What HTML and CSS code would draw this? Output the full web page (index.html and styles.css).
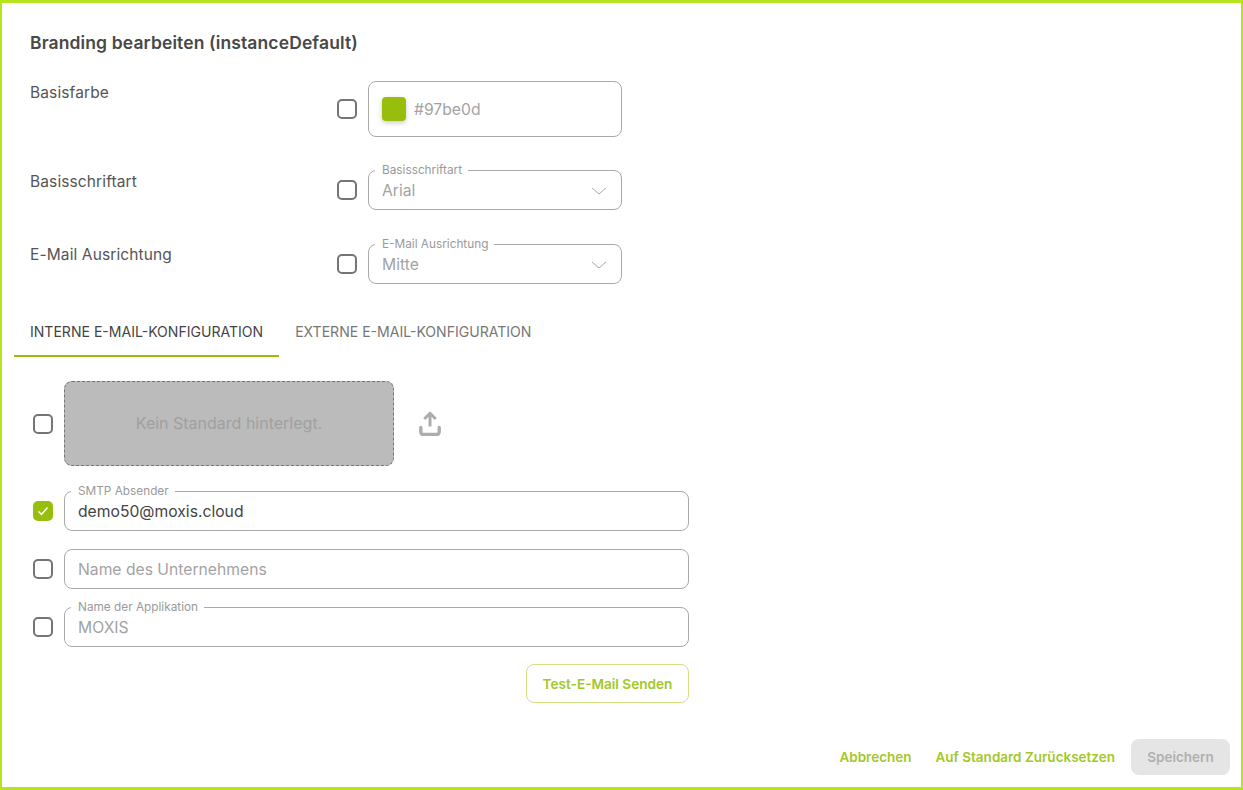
FILE: index.html
```html
<!DOCTYPE html>
<html lang="de">
<head>
<meta charset="utf-8">
<title>Branding bearbeiten</title>
<link rel="stylesheet" href="styles.css">
</head>
<body>
<main class="frame">
  <h1 class="title">Branding bearbeiten (instanceDefault)</h1>
  <section class="settings">
    <div class="setting setting-color">
      <span class="setting-label">Basisfarbe</span>
      <span class="check"></span>
      <div class="color-field"><span class="swatch"></span><span class="muted-value color-value">#97be0d</span></div>
    </div>
    <div class="setting setting-font">
      <span class="setting-label setting-label-offset">Basisschriftart</span>
      <span class="check check-legend"></span>
      <fieldset class="field field-short">
        <legend class="field-legend">Basisschriftart</legend>
        <span class="muted-value">Arial</span>
        <svg class="chevron" viewBox="0 0 16 8"><path d="M1 1l7 6 7-6"/></svg>
      </fieldset>
    </div>
    <div class="setting setting-align">
      <span class="setting-label setting-label-align">E-Mail Ausrichtung</span>
      <span class="check check-legend"></span>
      <fieldset class="field field-short">
        <legend class="field-legend">E-Mail Ausrichtung</legend>
        <span class="muted-value">Mitte</span>
        <svg class="chevron" viewBox="0 0 16 8"><path d="M1 1l7 6 7-6"/></svg>
      </fieldset>
    </div>
  </section>
  <nav class="tabs">
    <span class="tab tab-active">INTERNE E-MAIL-KONFIGURATION</span>
    <span class="tab">EXTERNE E-MAIL-KONFIGURATION</span>
  </nav>
  <section class="panel">
    <div class="logo-row">
      <span class="check"></span>
      <div class="dropzone">Kein Standard hinterlegt.</div>
      <svg class="upload" viewBox="0 0 22 25"><path d="M11 15.5V2.500M5.300 8 11 2.200 16.700 8"/><path class="upload-tray" d="M1.800 16.500V21a2.500 2.500 0 0 0 2.500 2.500h13.400a2.500 2.500 0 0 0 2.500-2.500v-4.500"/></svg>
    </div>
    <div class="mail-fields">
      <div class="mail-row">
        <span class="check check-on check-legend"><svg viewBox="0 0 20 20"><path d="M5.500 10.500l3 3 6-7"/></svg></span>
        <fieldset class="field field-wide">
          <legend class="field-legend">SMTP Absender</legend>
          <span class="strong-value">demo50@moxis.cloud</span>
        </fieldset>
      </div>
      <div class="mail-row">
        <span class="check check-legend"></span>
        <fieldset class="field field-wide">
          <legend class="field-legend field-legend-empty"></legend>
          <span class="muted-value">Name des Unternehmens</span>
        </fieldset>
      </div>
      <div class="mail-row">
        <span class="check check-legend"></span>
        <fieldset class="field field-wide">
          <legend class="field-legend">Name der Applikation</legend>
          <span class="muted-value">MOXIS</span>
        </fieldset>
      </div>
    </div>
    <div class="test-row"><button class="btn-outline" type="button">Test-E-Mail Senden</button></div>
  </section>
  <footer class="actions">
    <span class="link-action">Abbrechen</span>
    <span class="link-action">Auf Standard Zurücksetzen</span>
    <button class="btn-disabled" type="button">Speichern</button>
  </footer>
</main>
</body>
</html>
```

FILE: styles.css
```css
* { box-sizing: border-box; }
html, body { margin: 0; height: 100%; }
body {
  background: #fff;
  color: #444;
  font-family: "Inter", "Liberation Sans", sans-serif;
  font-size: 16px;
}
.frame {
  height: 790px;
  border-style: solid;
  border-color: #b5e61d;
  border-width: 3px 2px;
  padding: 29px 11px 12px 12px;
  display: flex;
  flex-direction: column;
}
.title {
  margin: 0 0 27px 16px;
  font-size: 17.500px;
  letter-spacing: .12px;
  line-height: 22px;
  font-weight: 600;
  color: #484848;
}
.settings { padding-left: 16px; }
.setting { display: flex; align-items: center; }
.setting-font, .setting-align { align-items: flex-end; }
.setting-font { margin-top: 27px; }
.setting-align { margin-top: 28px; }
.setting-label {
  width: 307px;
  align-self: flex-start;
  padding-top: 1px;
  line-height: 22px;
  font-size: 15.500px;
  letter-spacing: .12px;
  color: #555;
}
.setting-label-offset { padding-top: 7px; }
.setting-label-align { padding-top: 6px; }
.check {
  flex: none;
  width: 20px;
  height: 20px;
  border: 2px solid #757575;
  border-radius: 5px;
  background: #fff;
}
.check-legend { margin-bottom: 10px; }
.check-on { background: #97be0d; border-color: #97be0d; position: relative; }
.check-on svg {
  position: absolute;
  inset: -2px;
  width: 20px;
  height: 20px;
  fill: none;
  stroke: #fff;
  stroke-width: 1.500;
}
.color-field {
  margin-left: 11px;
  width: 254px;
  height: 56px;
  border: 1px solid #aaa;
  border-radius: 8px;
  padding-left: 13px;
  display: flex;
  align-items: center;
  gap: 8px;
}
.swatch {
  width: 24px;
  height: 24px;
  border-radius: 4px;
  background: #97be0d;
  box-shadow: 0 2px 5px rgba(0, 0, 0, .2);
}
.color-value { padding-top: 1px; }
.field {
  margin: 0;
  min-width: 0;
  height: 46px;
  border: 1px solid #aaa;
  border-radius: 8px;
  padding: 0 13px 4px;
  display: flex;
  align-items: center;
  justify-content: space-between;
}
.field-short { width: 254px; margin-left: 11px; }
.field-wide { width: 625px; margin-left: 11px; }
.field-legend {
  margin-left: -7px;
  padding: 0 6px 0 7px;
  height: 12px;
  line-height: 12px;
  font-size: 11.800px;
  color: #9a9a9a;
}
.field-legend-empty { padding: 0; margin: 0; width: 0; }
.muted-value { color: #a3a3a3; font-size: 15.700px; line-height: 22px; }
.strong-value { color: #444; font-size: 15.700px; line-height: 22px; }
.chevron {
  width: 16px;
  height: 8px;
  margin-right: 1px;
  fill: none;
  stroke: #aaa;
  stroke-width: 1;
}
.tabs {
  display: flex;
  margin-top: 25px;
  height: 48px;
}
.tab {
  padding: 0 16px;
  height: 48px;
  line-height: 46px;
  font-size: 14.050px;
  color: #777;
  white-space: nowrap;
}
.tab-active {
  color: #444;
  border-bottom: 2px solid #97be0d;
}
.panel { padding: 24px 0 0 19px; }
.logo-row { display: flex; align-items: center; }
.dropzone {
  margin-left: 11px;
  width: 330px;
  height: 85px;
  padding-bottom: 2px;
  border: 1px dashed #757575;
  border-radius: 8px;
  background: #bbb;
  color: #a0a0a0;
  display: flex;
  align-items: center;
  justify-content: center;
}
.upload {
  margin-left: 25px;
  width: 22px;
  height: 25px;
  fill: none;
  stroke: #adadad;
  stroke-width: 3;
  stroke-linejoin: round;
}
.upload-tray { stroke-width: 3.400; stroke-linecap: round; }
.mail-fields {
  margin-top: 19px;
  display: flex;
  flex-direction: column;
  gap: 12px;
}
.mail-row { display: flex; align-items: flex-end; }
.test-row {
  margin-top: 17px;
  width: 656px;
  display: flex;
  justify-content: flex-end;
}
.btn-outline {
  width: 163px;
  height: 39px;
  border: 1px solid #d0e27f;
  border-radius: 8px;
  background: #fff;
  color: #a3c828;
  font: 600 13.600px "Inter", "Liberation Sans", sans-serif;
}
.actions {
  margin-top: auto;
  display: flex;
  align-items: center;
  justify-content: flex-end;
  gap: 24px;
}
.link-action {
  color: #a3c828;
  font-size: 13.500px;
  font-weight: 600;
  padding-bottom: 1px;
}
.btn-disabled {
  margin-left: -8px;
  width: 99px;
  height: 36px;
  border: 0;
  border-radius: 8px;
  background: #e5e5e5;
  color: #b0b0b0;
  font: 600 13.500px "Inter", "Liberation Sans", sans-serif;
}
```
